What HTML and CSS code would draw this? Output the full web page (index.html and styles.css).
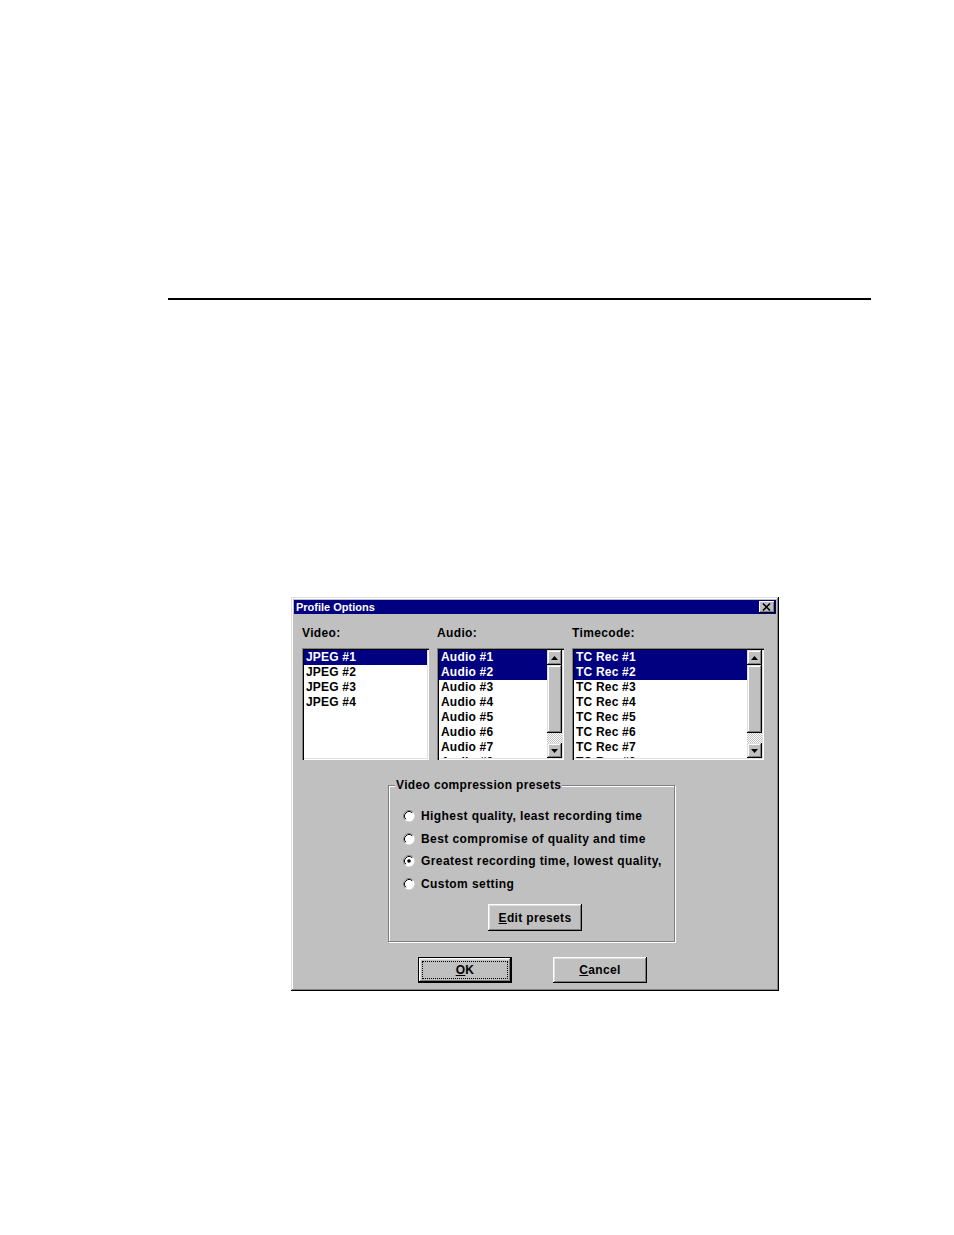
FILE: index.html
```html
<!DOCTYPE html>
<html>
<head>
<meta charset="utf-8">
<link rel="stylesheet" href="styles.css">
</head>
<body>
<div class="page">
  <div class="rule"></div>
  <div class="dialog">
    <div class="titlebar">
      <span class="title">Profile Options</span>
      <span class="close"><svg width="9" height="8" viewBox="0 0 9 8"><path d="M1 0.5 L8 7.5 M8 0.5 L1 7.5" stroke="#000" stroke-width="1.6" fill="none"/></svg></span>
    </div>
    <div class="body">
      <div class="columns">
        <div class="col col-video">
          <div class="label">Video:</div>
          <div class="list">
            <div class="items">
              <div class="item sel">JPEG #1</div>
              <div class="item">JPEG #2</div>
              <div class="item">JPEG #3</div>
              <div class="item">JPEG #4</div>
            </div>
          </div>
        </div>
        <div class="col col-audio">
          <div class="label">Audio:</div>
          <div class="list">
            <div class="items">
              <div class="item sel">Audio #1</div>
              <div class="item sel">Audio #2</div>
              <div class="item">Audio #3</div>
              <div class="item">Audio #4</div>
              <div class="item">Audio #5</div>
              <div class="item">Audio #6</div>
              <div class="item">Audio #7</div>
              <div class="item">Audio #8</div>
            </div>
            <div class="scrollbar">
              <div class="sbtn"><svg width="7" height="4" viewBox="0 0 7 4"><polygon points="0,4 7,4 3.5,0" fill="#000"/></svg></div>
              <div class="thumb"></div>
              <div class="track"></div>
              <div class="sbtn"><svg width="7" height="4" viewBox="0 0 7 4"><polygon points="0,0 7,0 3.5,4" fill="#000"/></svg></div>
            </div>
          </div>
        </div>
        <div class="col col-tc">
          <div class="label">Timecode:</div>
          <div class="list">
            <div class="items">
              <div class="item sel">TC Rec #1</div>
              <div class="item sel">TC Rec #2</div>
              <div class="item">TC Rec #3</div>
              <div class="item">TC Rec #4</div>
              <div class="item">TC Rec #5</div>
              <div class="item">TC Rec #6</div>
              <div class="item">TC Rec #7</div>
              <div class="item">TC Rec #8</div>
            </div>
            <div class="scrollbar">
              <div class="sbtn"><svg width="7" height="4" viewBox="0 0 7 4"><polygon points="0,4 7,4 3.5,0" fill="#000"/></svg></div>
              <div class="thumb"></div>
              <div class="track"></div>
              <div class="sbtn"><svg width="7" height="4" viewBox="0 0 7 4"><polygon points="0,0 7,0 3.5,4" fill="#000"/></svg></div>
            </div>
          </div>
        </div>
      </div>

      <fieldset class="group">
        <legend>Video compression presets</legend>
        <div class="radio"><svg class="rb" width="12" height="12" viewBox="0 0 12 12"><circle cx="6" cy="6" r="5.5" fill="#fff"/><path d="M2.11 9.89 A5.5 5.5 0 0 1 9.89 2.11" stroke="#808080" fill="none"/><path d="M2.82 9.18 A4.5 4.5 0 0 1 9.18 2.82" stroke="#000" fill="none"/></svg><span>Highest quality, least recording time</span></div>
        <div class="radio"><svg class="rb" width="12" height="12" viewBox="0 0 12 12"><circle cx="6" cy="6" r="5.5" fill="#fff"/><path d="M2.11 9.89 A5.5 5.5 0 0 1 9.89 2.11" stroke="#808080" fill="none"/><path d="M2.82 9.18 A4.5 4.5 0 0 1 9.18 2.82" stroke="#000" fill="none"/></svg><span>Best compromise of quality and time</span></div>
        <div class="radio"><svg class="rb" width="12" height="12" viewBox="0 0 12 12"><circle cx="6" cy="6" r="5.5" fill="#fff"/><path d="M2.11 9.89 A5.5 5.5 0 0 1 9.89 2.11" stroke="#808080" fill="none"/><path d="M2.82 9.18 A4.5 4.5 0 0 1 9.18 2.82" stroke="#000" fill="none"/><circle cx="6" cy="6" r="1.8" fill="#000"/></svg><span>Greatest recording time, lowest quality,</span></div>
        <div class="radio"><svg class="rb" width="12" height="12" viewBox="0 0 12 12"><circle cx="6" cy="6" r="5.5" fill="#fff"/><path d="M2.11 9.89 A5.5 5.5 0 0 1 9.89 2.11" stroke="#808080" fill="none"/><path d="M2.82 9.18 A4.5 4.5 0 0 1 9.18 2.82" stroke="#000" fill="none"/></svg><span>Custom setting</span></div>
        <button class="btn edit"><u>E</u>dit presets</button>
      </fieldset>

      <div class="actions">
        <button class="btn default"><span class="focus"><u>O</u>K</span></button>
        <button class="btn"><u>C</u>ancel</button>
      </div>
    </div>
  </div>
</div>
</body>
</html>
```

FILE: styles.css
```css
html, body {
  margin: 0;
  padding: 0;
  background: #fff;
}

.page {
  padding-top: 298px;
  font-family: "Liberation Sans", Arial, sans-serif;
  font-size: 12px;
  font-weight: bold;
  color: #000;
}

.rule {
  margin-left: 168px;
  width: 703px;
  height: 2px;
  background: #000;
}

.dialog {
  margin: 297px 0 0 291px;
  width: 488px;
  height: 394px;
  box-sizing: border-box;
  padding: 3px;
  background: #c0c0c0;
  box-shadow: inset -1px -1px #000, inset 1px 1px #dfdfdf, inset -2px -2px #808080, inset 2px 2px #fff;
}

.titlebar {
  height: 14px;
  background: #000080;
  color: #fff;
  display: flex;
  align-items: center;
  justify-content: space-between;
  padding: 0 1px 0 2px;
}

.title {
  font-size: 11px;
  line-height: 14px;
}

.close {
  width: 16px;
  height: 12px;
  box-sizing: border-box;
  background: #c0c0c0;
  box-shadow: inset -1px -1px #000, inset 1px 1px #fff, inset -2px -2px #808080;
  display: flex;
  align-items: center;
  justify-content: center;
}

.close svg { display: block; margin-left: -1px; }

.body {
  padding: 12px 0 0 8px;
  letter-spacing: 0.35px;
}

.columns {
  display: flex;
}

.col-video { width: 127px; margin-right: 8px; }
.col-audio { width: 127px; margin-right: 8px; }
.col-tc { width: 192px; }

.label {
  height: 14px;
  line-height: 14px;
  margin-bottom: 8px;
}

.list {
  height: 112px;
  box-sizing: border-box;
  padding: 2px;
  background: #fff;
  box-shadow: inset 1px 1px #808080, inset 2px 2px #000, inset -1px -1px #fff, inset -2px -2px #dfdfdf;
  display: flex;
  overflow: hidden;
}

.items {
  flex: 1;
  overflow: hidden;
  letter-spacing: 0.2px;
}

.item {
  height: 15px;
  line-height: 15px;
  padding-left: 2px;
  white-space: nowrap;
}

.item.sel {
  background: #000080;
  color: #fff;
}

.scrollbar {
  width: 15px;
  display: flex;
  flex-direction: column;
}

.sbtn, .thumb {
  background: #c0c0c0;
  box-shadow: inset -1px -1px #000, inset 1px 1px #dfdfdf, inset -2px -2px #808080, inset 2px 2px #fff;
}

.sbtn {
  height: 15px;
  display: flex;
  align-items: center;
  justify-content: center;
}

.sbtn svg { display: block; }

.thumb {
  height: 68px;
}

.track {
  flex: 1;
  background: repeating-conic-gradient(#fff 0 25%, #c0c0c0 0 50%) 0 0 / 2px 2px;
}

.group {
  margin: 18px 0 0 86px;
  width: 287px;
  height: 164px;
  box-sizing: border-box;
  border: 1px solid #808080;
  box-shadow: 1px 1px 0 #fff, inset 1px 1px 0 #fff;
  padding: 13px 0 0 6px;
}

.group legend {
  padding: 0 1px;
  line-height: 14px;
  background: #c0c0c0;
}

.radio {
  height: 22.5px;
  display: flex;
  align-items: center;
  padding-left: 8px;
  letter-spacing: 0.42px;
}

.rb {
  display: block;
  margin-right: 6px;
  flex: none;
}

.btn {
  font-family: inherit;
  font-size: 12px;
  font-weight: bold;
  letter-spacing: 0.35px;
  color: #000;
  width: 94px;
  height: 27px;
  box-sizing: border-box;
  border: 0;
  padding: 0;
  background: #c0c0c0;
  box-shadow: inset -1px -1px #000, inset 1px 1px #fff, inset -2px -2px #808080, inset 2px 2px #dfdfdf;
  display: flex;
  align-items: center;
  justify-content: center;
}

.edit {
  margin: 9px 0 0 93px;
}

.actions {
  display: flex;
  gap: 41px;
  margin: 15px 0 0 116px;
}

.actions .btn {
  height: 26px;
}

.btn.default {
  border: 1px solid #000;
  box-shadow: inset -1px -1px #000, inset 1px 1px #fff, inset -2px -2px #808080, inset 2px 2px #dfdfdf;
  padding: 3px;
}

.focus {
  flex: 1;
  align-self: stretch;
  border: 1px dotted #000;
  display: flex;
  align-items: center;
  justify-content: center;
}
```
